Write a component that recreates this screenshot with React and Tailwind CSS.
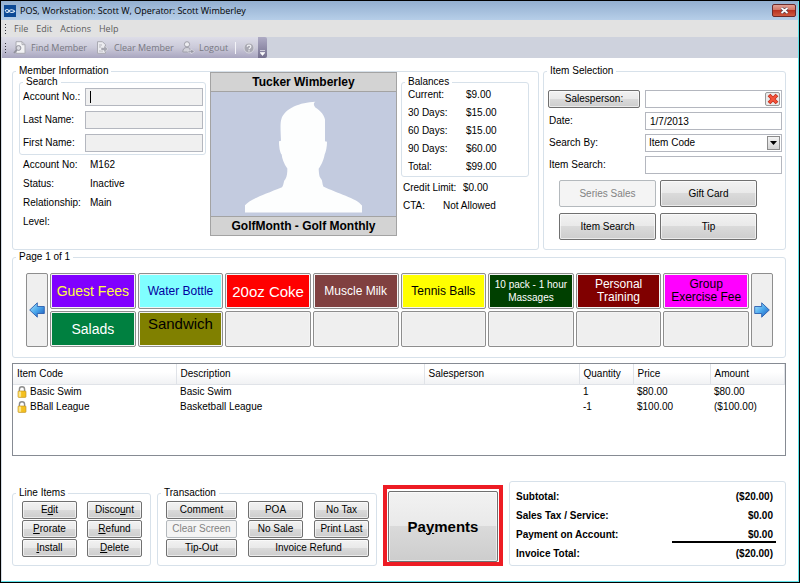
import React, { useState } from 'react';
import clsx from 'clsx';

const TILES = [
  { label: 'Guest Fees', style: 'bg-[#8000ff] text-[#ffff40] text-[14px]' },
  { label: 'Water Bottle', style: 'bg-[#80ffff] text-[#0000a0] text-[12px]' },
  { label: '20oz Coke', style: 'bg-[#ff0000] text-white text-[15px]' },
  { label: 'Muscle Milk', style: 'bg-[#804040] text-white text-[12px]' },
  { label: 'Tennis Balls', style: 'bg-[#ffff00] text-black text-[12px]' },
  { label: '10 pack - 1 hour Massages', style: 'bg-[#004000] text-white text-[10px]' },
  { label: 'Personal Training', style: 'bg-[#800000] text-white text-[12px] px-3' },
  { label: 'Group Exercise Fee', style: 'bg-[#ff00ff] text-black text-[12px]' },
  { label: 'Salads', style: 'bg-[#008040] text-white text-[14px]' },
  { label: 'Sandwich', style: 'bg-[#808000] text-black text-[15px] pb-3' },
  null, null, null, null, null, null,
];

const BALANCES = [
  ['Current:', '$9.00'],
  ['30 Days:', '$15.00'],
  ['60 Days:', '$15.00'],
  ['90 Days:', '$60.00'],
  ['Total:', '$99.00'],
];

const MEMBER_DETAILS = [
  ['Account No:', 'M162'],
  ['Status:', 'Inactive'],
  ['Relationship:', 'Main'],
  ['Level:', ''],
];

const LINES = [
  { code: 'Basic Swim', description: 'Basic Swim', qty: '1', price: '$80.00', amount: '$80.00' },
  { code: 'BBall League', description: 'Basketball League', qty: '-1', price: '$100.00', amount: '($100.00)' },
];

const COLUMNS = [
  { label: 'Item Code', width: 'w-[163px]' },
  { label: 'Description', width: 'w-[248px]' },
  { label: 'Salesperson', width: 'w-[155px]' },
  { label: 'Quantity', width: 'w-[54px]' },
  { label: 'Price', width: 'w-[77px]' },
  { label: 'Amount', width: '' },
];

const TOTALS = [
  ['Subtotal:', '($20.00)'],
  ['Sales Tax / Service:', '$0.00'],
  ['Payment on Account:', '$0.00'],
  ['Invoice Total:', '($20.00)'],
];

const field = 'h-[18px] w-full min-w-0 border border-[#b4b7bf] outline-none';

// Group box, the title sits on top of the border line
const Group = ({ title, className, children }) => (
  <fieldset className={clsx('relative min-w-0 rounded-[3px] border border-[#d7e1ea]', className)}>
    {title && (
      <legend className="absolute -top-[7px] left-[3px] bg-white px-[3px] leading-[12px]">{title}</legend>
    )}
    {children}
  </fieldset>
);

const Button = ({ className, disabled, children }) => (
  <button
    type="button"
    disabled={disabled}
    className={clsx(
      'flex items-center justify-center whitespace-nowrap rounded-[2px] border',
      disabled
        ? 'border-[#b4b9bd] bg-[#f4f4f4] text-[#838383]'
        : 'border-[#707070] bg-[linear-gradient(#f2f2f2_0%,#e9e9e9_50%,#dadada_50%,#cdcdcd_100%)] text-black shadow-[inset_0_0_0_1px_rgba(255,255,255,0.6)]',
      className,
    )}
  >
    <span>{children}</span>
  </button>
);

const ArrowIcon = ({ right }) => (
  <svg viewBox="0 0 16 16" className={clsx('h-4 w-4', right && 'rotate-180')}>
    <defs>
      <linearGradient id={right ? 'arrow-r' : 'arrow-l'} x1={right ? '1' : '0'} x2={right ? '0' : '1'} y1={right ? '1' : '0'} y2={right ? '0' : '1'}>
        <stop offset="0" stopColor="#b5ecff" />
        <stop offset="0.5" stopColor="#4ba8ec" />
        <stop offset="1" stopColor="#1a55b8" />
      </linearGradient>
    </defs>
    <path d="M.7 8 8.3.8v3.7h7v7h-7v3.7z" fill={right ? 'url(#arrow-r)' : 'url(#arrow-l)'} stroke="#2b5fb0" strokeWidth="0.9" />
  </svg>
);

const LockIcon = () => (
  <svg viewBox="0 0 10 12" className="h-3 w-[10px] shrink-0">
    <path d="M2.4 6V3.400a2.600 2.600 0 0 1 5.200 0V6" fill="none" stroke="#8d8d8d" strokeWidth="1.400" />
    <rect x="1" y="5" width="8" height="6.400" rx="0.800" fill="#f4c020" stroke="#b98a1c" strokeWidth="0.600" />
    <path d="M1.600 5.600h2.500v5.200h-2.500z" fill="#fbe58a" />
  </svg>
);

const FindIcon = () => (
  <svg viewBox="0 0 13 13" className="h-[13px] w-[13px]">
    <path d="M3 .7h6l3 3v8.6H3z" fill="#f3f3f5" stroke="#aaaab2" />
    <path d="M9 .7v3h3" fill="none" stroke="#aaaab2" />
    <circle cx="5.5" cy="7" r="2.4" fill="#dcdce2" stroke="#92929c" />
    <path d="M3.8 8.8 1 12" stroke="#92929c" strokeWidth="1.8" />
  </svg>
);

const ClearIcon = () => (
  <svg viewBox="0 0 13 13" className="h-[13px] w-[13px]">
    <path d="M1.5.7h5l3 3v8.6h-8z" fill="#ececf0" stroke="#aaaab2" />
    <path d="M3 4h3M3 6h2M3 10h4" stroke="#b5b5bd" />
    <path d="M5 6.5h3V4.3L12 8 8 11.5V9.5H5z" fill="#a6a6b0" stroke="#f1f1f4" strokeWidth="0.5" />
  </svg>
);

const LogoutIcon = () => (
  <svg viewBox="0 0 13 13" className="h-[13px] w-[13px]">
    <circle cx="5" cy="3.3" r="2.6" fill="#ececf0" stroke="#a0a0aa" />
    <path d="M.8 11c0-3 1.5-4.5 4.2-4.5 1.5 0 2.5.5 3 1.5V11z" fill="#d2d2da" stroke="#a0a0aa" />
    <path d="M6 9.7h3V8l3.5 2.6L9 12.8v-1.6H6z" fill="#9898a4" stroke="#f1f1f4" strokeWidth="0.5" />
  </svg>
);

const HelpIcon = () => (
  <svg viewBox="0 0 12 12" className="h-3 w-3">
    <circle cx="6" cy="6" r="5" fill="#a9a9b3" stroke="#d6d6de" />
    <path d="M4.2 4.7C4.3 2.6 7.8 2.6 7.8 4.6 7.8 6 6 5.9 6 7.3M6 8.3v1.2" fill="none" stroke="#f3f3f6" strokeWidth="1.2" />
  </svg>
);

const Silhouette = () => (
  <svg viewBox="33 97 555 371" preserveAspectRatio="xMidYMid meet" className="h-[124px] w-full">
    <path
      fill="#fdfefe"
      d="M135 458V436C150 418 190 405 246 382 252 375 250 362 256 358 261 350 262 340 262 326 252 312 246 296 245 284 240 278 237 262 237 244L243 243C242 215 240 190 244 178 255 145 300 128 346 126 340 130 340 136 346 143 362 152 374 168 375 180V244L381 246C381 262 378 276 374 284 370 305 362 318 356 327 357 345 358 352 363 357 368 362 366 372 370 380 410 400 470 415 486 437V458Z"
    />
  </svg>
);

const Grip = () => (
  <span className="flex flex-col gap-[2px]">
    {[0, 1, 2, 3].map(i => <span key={i} className="h-px w-px bg-[#33333d]" />)}
  </span>
);

const TitleBar = () => (
  <header className="flex h-[19px] items-center bg-[linear-gradient(#93afd0,#b6cee8)] pl-[3px] pr-[2px] font-['Open_Sans',sans-serif]">
    <svg viewBox="0 0 12 12" className="h-3 w-3">
      <rect width="12" height="12" fill="#0d4a96" />
      <path d="M1 6c1-2 3-2 4 0s4 2 6 0M1.5 6.5c1 1.5 3 1 3.5-.5s4-2 5.5 0" fill="none" stroke="#e2eefa" strokeWidth="1.1" />
    </svg>
    <h1 className="ml-1 flex-1 text-[9px]">POS, Workstation: Scott W, Operator: Scott Wimberley</h1>
    <button
      type="button"
      aria-label="Close"
      className="flex h-[13px] w-6 items-center justify-center rounded-[2px] border border-[#6a2a2a] bg-[linear-gradient(#e2a195_0%,#d0705f_50%,#b93220_50%,#cf5a40_100%)]"
    >
      <svg viewBox="0 0 9 7" className="h-[7px] w-[9px]">
        <path d="M1.5 1l6 5M7.5 1l-6 5" stroke="#4b3a4a" strokeWidth="3" />
        <path d="M1.5 1l6 5M7.5 1l-6 5" stroke="#fff" strokeWidth="1.8" />
      </svg>
    </button>
  </header>
);

const MenuBar = () => (
  <nav className="flex h-[17px] items-center gap-2 bg-[#e2e2e2] pl-[4px] font-['Open_Sans',sans-serif] text-[9px] text-[#5c5c5c]">
    <Grip />
    {['File', 'Edit', 'Actions', 'Help'].map(item => (
      <button key={item} type="button">{item}</button>
    ))}
  </nav>
);

const ToolBar = () => (
  <div className="flex h-[21px] bg-[#ced2dd] pl-[1px] font-['Open_Sans',sans-serif] text-[9px] text-[#787882]">
    <div className="flex w-[256px] items-center bg-[linear-gradient(#dddde8_0%,#cbcad9_50%,#a9a6c0_100%)] pl-[3px]">
      <Grip />
      <button type="button" className="ml-[7px] flex w-[83px] items-center gap-[5px] whitespace-nowrap"><FindIcon />Find Member</button>
      <button type="button" className="flex w-[86px] items-center gap-[5px] whitespace-nowrap"><ClearIcon />Clear Member</button>
      <button type="button" className="flex w-[53px] items-center gap-[4px] whitespace-nowrap"><LogoutIcon />Logout</button>
      <span className="h-3 w-px bg-[#f4f4f8]" />
      <button type="button" aria-label="Help" className="ml-[7px]"><HelpIcon /></button>
    </div>
    <div className="flex w-[9px] items-end justify-center rounded-r-[2px] bg-[linear-gradient(#aeabc4,#75718f)] pb-[2px]">
      <svg viewBox="0 0 5 6" className="h-[6px] w-[5px]"><path d="M0 .5h5M0 2.5h5L2.5 5.5z" stroke="#fff" strokeWidth="0.6" fill="#fff" /></svg>
    </div>
  </div>
);

const SearchField = ({ id, label, caret }) => (
  <div className="flex items-center">
    <label htmlFor={id} className="w-[62px] shrink-0">{label}</label>
    <div className="relative flex min-w-0 flex-1">
      <input id={id} type="text" className={clsx(field, 'bg-[#f0f0f0] px-1')} />
      {caret && <span className="absolute left-[5px] top-[3px] h-[12px] w-px bg-black" />}
    </div>
  </div>
);

const MemberInformation = () => (
  <Group title="Member Information" className="flex flex-1 items-start gap-[4px] pb-[13px] pl-[6px]">
    <div className="w-[187px] pt-[10px]">
      <Group title="Search" className="flex flex-col gap-[5px] pb-[2px] pl-[3px] pr-[2px] pt-[5px]">
        <SearchField id="account" label="Account No.:" caret />
        <SearchField id="last" label="Last Name:" />
        <SearchField id="first" label="First Name:" />
      </Group>
      <dl className="pl-[4px] leading-[19px]">
        {MEMBER_DETAILS.map(([label, value]) => (
          <div key={label} className="flex">
            <dt className="w-[67px]">{label}</dt>
            <dd>{value}</dd>
          </div>
        ))}
      </dl>
    </div>

    <figure className="w-[187px] border border-[#a3a3a3] bg-[#c3cbdf] text-center text-[12px] font-bold">
      <h2 className="border-b border-[#a3a3a3] bg-[#d3d3d3] leading-[18px]">Tucker Wimberley</h2>
      <Silhouette />
      <figcaption className="border-t border-[#a3a3a3] bg-[#d3d3d3] leading-[18px]">GolfMonth - Golf Monthly</figcaption>
    </figure>

    <div className="w-[128px] pt-[10px] leading-[18px]">
      <Group title="Balances" className="pl-[6px] pt-[3px]">
        {BALANCES.map(([label, value]) => (
          <div key={label} className="flex">
            <span className="w-[58px]">{label}</span>
            <span>{value}</span>
          </div>
        ))}
      </Group>
      <div className="flex pl-[2px] pt-[2px]">
        <span className="w-[60px]">Credit Limit:</span>
        <span>$0.00</span>
      </div>
      <div className="flex pl-[2px]">
        <span className="w-[40px]">CTA:</span>
        <span>Not Allowed</span>
      </div>
    </div>
  </Group>
);

const ItemSelection = () => {
  const [date, setDate] = useState('1/7/2013');

  return (
    <Group title="Item Selection" className="w-[243px] pl-[4px] pr-[3px] pt-[18px]">
      <div className="grid grid-cols-[92px_1fr] items-center gap-x-[5px] gap-y-[4px]">
        <Button className="h-[18px]">Salesperson:</Button>
        <div className="relative flex min-w-0">
          <input type="text" aria-label="Salesperson" className={clsx(field, 'px-1')} />
          <button
            type="button"
            aria-label="Clear salesperson"
            className="absolute right-[2px] top-[2px] flex h-[14px] w-[15px] items-center justify-center rounded-[2px] border border-[#9a9a9a] bg-[#eaeaea]"
          >
            <svg viewBox="0 0 12 12" className="h-[12px] w-[12px]">
              <path d="M2 2l8 8M10 2l-8 8" stroke="#c22a18" strokeWidth="3.8" />
              <path d="M2.5 2.5l7 7M9.5 2.5l-7 7" stroke="#f4533a" strokeWidth="2.4" />
            </svg>
          </button>
        </div>

        <label htmlFor="date" className="pl-px">Date:</label>
        <input id="date" type="text" value={date} onChange={e => setDate(e.target.value)} className={clsx(field, 'px-1')} />

        <label htmlFor="search-by" className="pl-px">Search By:</label>
        <div className="relative flex min-w-0">
          <select id="search-by" className={clsx(field, 'appearance-none px-[3px]')}>
            <option>Item Code</option>
          </select>
          <span className="pointer-events-none absolute right-[2px] top-[2px] flex h-[14px] w-[13px] items-center justify-center border border-[#8c8c8c] bg-[linear-gradient(#f4f4f4,#d4d4d4)]">
            <svg viewBox="0 0 7 4" className="h-[4px] w-[7px]"><path d="M0 0h7L3.5 4z" /></svg>
          </span>
        </div>

        <label htmlFor="item-search" className="pl-px">Item Search:</label>
        <input id="item-search" type="text" className={clsx(field, 'px-1')} />
      </div>

      <div className="mt-[6px] grid grid-cols-[97px_97px] gap-x-[4px] gap-y-[6px] pl-[11px]">
        <Button className="h-[27px]" disabled>Series Sales</Button>
        <Button className="h-[27px]">Gift Card</Button>
        <Button className="h-[27px]">Item Search</Button>
        <Button className="h-[27px]">Tip</Button>
      </div>
    </Group>
  );
};

const ItemPage = () => {
  const arrow = 'flex w-[22px] items-center justify-center rounded-[2px] border border-[#8e8e8e] bg-[#efefef]';
  return (
    <Group title="Page 1 of 1" className="mt-[7px] flex gap-[2px] pb-[10px] pl-[13px] pr-[12px] pt-[15px]">
      <button type="button" aria-label="Previous page" className={arrow}><ArrowIcon /></button>
      <div className="grid flex-1 grid-cols-8 gap-[2px]">
        {TILES.map((tile, i) => (
          <button
            key={i}
            type="button"
            aria-label={tile ? undefined : 'Empty slot'}
            className="flex h-[36px] rounded-[2px] border border-[#8e8e8e] bg-[#f4f4f4] p-px"
          >
            <span className={clsx('flex h-full w-full items-center justify-center text-center leading-[13px]', tile ? tile.style : 'bg-[#efefef]')}>
              {tile?.label}
            </span>
          </button>
        ))}
      </div>
      <button type="button" aria-label="Next page" className={arrow}><ArrowIcon right /></button>
    </Group>
  );
};

const LineTable = () => (
  <div className="mt-[5px] min-h-[93px] border border-[#868b93]">
    <table className="w-full table-fixed text-left">
      <thead>
        <tr className="h-[20px] bg-[linear-gradient(#ffffff_40%,#f1f2f4)]">
          {COLUMNS.map(col => (
            <th key={col.label} className={clsx('border-b border-r border-[#e0e3e8] p-0 pl-[4px] font-normal', col.width)}>
              {col.label}
            </th>
          ))}
        </tr>
      </thead>
      <tbody>
        {LINES.map(line => (
          <tr key={line.code} className="h-[15px]">
            <td className="p-0 pl-[4px]">
              <span className="flex items-center gap-[3px]"><LockIcon />{line.code}</span>
            </td>
            <td className="p-0 pl-[4px]">{line.description}</td>
            <td />
            <td className="p-0 pl-[4px]">{line.qty}</td>
            <td className="p-0 pl-[4px]">{line.price}</td>
            <td className="p-0 pl-[4px]">{line.amount}</td>
          </tr>
        ))}
      </tbody>
    </table>
  </div>
);

const Footer = () => (
  <footer className="mt-[25px] flex items-end gap-[6px]">
    <Group title="Line Items" className="grid w-[139px] grid-cols-[55px_55px] gap-x-[10px] gap-y-px px-[9px] pb-[8px] pt-[7px]">
      <Button className="h-[18px]">E<u>d</u>it</Button>
      <Button className="h-[18px]">Disco<u>u</u>nt</Button>
      <Button className="h-[18px]"><u>P</u>rorate</Button>
      <Button className="h-[18px]"><u>R</u>efund</Button>
      <Button className="h-[18px]"><u>I</u>nstall</Button>
      <Button className="h-[18px]"><u>D</u>elete</Button>
    </Group>

    <Group title="Transaction" className="grid w-[220px] grid-cols-[71px_55px_55px] gap-x-[11px] gap-y-px px-[8px] pb-[8px] pt-[7px]">
      <Button className="h-[18px]">Comment</Button>
      <Button className="h-[18px]">POA</Button>
      <Button className="h-[18px]">No Tax</Button>
      <Button className="h-[18px]" disabled>Clear Screen</Button>
      <Button className="h-[18px]">No Sale</Button>
      <Button className="h-[18px]">Print Last</Button>
      <Button className="h-[18px]">Tip-Out</Button>
      <Button className="col-span-2 h-[18px]">Invoice Refund</Button>
    </Group>

    <div className="w-[120px] border-4 border-[#ed1c24] px-px pt-[2px]">
      <Button className="h-[71px] w-full text-[15px] font-bold">Pa<u>y</u>ments</Button>
    </div>

    <Group className="flex-1 pb-[2px] pl-[6px] pr-[9px] pt-[5px] font-bold leading-[19px]">
      {TOTALS.map(([label, value], i) => (
        <div key={label} className="relative flex justify-between pr-[3px]">
          <span>{label}</span>
          <span>{value}</span>
          {i === 3 && <span className="absolute -top-[3px] right-0 h-[2px] w-[104px] bg-black" />}
        </div>
      ))}
    </Group>
  </footer>
);

const App = () => (
  <div className="flex min-h-screen flex-col border border-black bg-white font-['Liberation_Sans',Arial,sans-serif] text-[10px] leading-[12px] text-black">
    <div className="flex flex-1 flex-col border-b border-r border-[#5fe3ea]">
      <TitleBar />
      <MenuBar />
      <ToolBar />
      <main className="flex-1 border-l border-[#d5dde6] pb-[15px] pl-[10px] pr-[12px] pt-[13px]">
        <div className="flex gap-[4px]">
          <MemberInformation />
          <ItemSelection />
        </div>
        <ItemPage />
        <LineTable />
        <Footer />
      </main>
    </div>
  </div>
);

export default App;
